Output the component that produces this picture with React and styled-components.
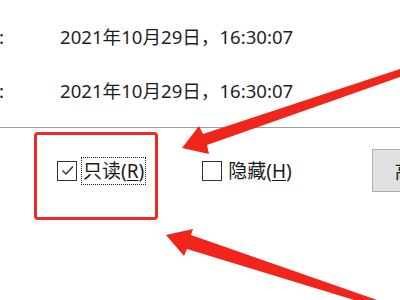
import styled, { createGlobalStyle } from "styled-components"

const GlobalStyle = createGlobalStyle`
    html, body {
        margin: 0;
        padding: 0;
        background: #ffffff;
    }
    body {
        font-family: "Noto Sans", "Noto Sans CJK SC", sans-serif;
        color: #1a1a1a;
    }
`

export default function App() {
    return (
        <Page>
            <GlobalStyle />
            <InfoList>
                <InfoRow>
                    <Label>修改时间:</Label>
                    <Value>2021年10月29日，16:30:07</Value>
                </InfoRow>
                <InfoRow>
                    <Label>访问时间:</Label>
                    <Value>2021年10月29日，16:30:07</Value>
                </InfoRow>
            </InfoList>
            <Divider />
            <AttrRow>
                <CheckItem>
                    <Box>
                        <svg width="15" height="15" viewBox="0 0 15 15">
                            <polyline points="2.5,7.5 6,11 13,3.5" fill="none" stroke="#333" strokeWidth="1.4" />
                        </svg>
                    </Box>
                    <CheckText focused>只读(<u>R</u>)</CheckText>
                </CheckItem>
                <CheckItem>
                    <Box />
                    <CheckText>隐藏(<u>H</u>)</CheckText>
                </CheckItem>
                <Button>高级(D)...</Button>
            </AttrRow>
            <Highlight />
            <Arrows width="400" height="300" viewBox="0 0 400 300">
                <polygon points="182,148 199,126 203,134 400,69 400,77 207,145 209,154" fill="#f0261d" />
                <polygon points="166,235 193,229 191,235 400,308 400,314 187,249 184,256" fill="#f0261d" />
            </Arrows>
        </Page>
    )
}

const Page = styled.main`
    position: relative;
    width: 400px;
    height: 300px;
    overflow: hidden;
    background: #ffffff;
`

const InfoList = styled.section`
    display: flex;
    flex-direction: column;
    gap: 28px;
    padding-top: 22px;
`

const InfoRow = styled.div`
    display: flex;
    align-items: center;
    height: 26px;
    font-size: 18.6px;
`

const Label = styled.span`
    width: 80px;
    margin-left: -76px;
    text-align: right;
    white-space: nowrap;
`

const Value = styled.span`
    margin-left: 56px;
    white-space: nowrap;
    color: #1f1f1f;
`

const Divider = styled.hr`
    margin: 25px 0 0;
    border: none;
    border-top: 1px solid #a0a0a0;
`

const AttrRow = styled.div`
    display: flex;
    align-items: center;
    height: 43px;
    margin-top: 21px;
    padding-left: 57px;
`

const CheckItem = styled.label`
    display: flex;
    align-items: center;
    gap: 4px;
    margin-right: 56px;
`

const Box = styled.span`
    display: flex;
    align-items: center;
    justify-content: center;
    box-sizing: border-box;
    width: 20px;
    height: 20px;
    border: 1.6px solid #333333;
    background: #ffffff;
`

const CheckText = styled.span`
    font-size: 19px;
    line-height: 26px;
    padding: 0 1px;
    border: 1px dotted ${p => (p.focused ? "#222" : "transparent")};
    white-space: nowrap;
    u {
        text-underline-offset: 2px;
    }
`

const Button = styled.button`
    box-sizing: border-box;
    flex-shrink: 0;
    height: 43px;
    width: 120px;
    margin-left: 22px;
    padding: 0 0 0 22px;
    text-align: left;
    background: #e1e1e1;
    border: 1px solid #adadad;
    font-family: "Noto Sans", "Noto Sans CJK SC", sans-serif;
    font-size: 19px;
    color: #1a1a1a;
`

const Highlight = styled.div`
    position: absolute;
    left: 34px;
    top: 132px;
    width: 124px;
    height: 88px;
    box-sizing: border-box;
    border: 3px solid #ef2a21;
    border-radius: 4px;
    pointer-events: none;
`

const Arrows = styled.svg`
    position: absolute;
    left: 0;
    top: 0;
    pointer-events: none;
`
